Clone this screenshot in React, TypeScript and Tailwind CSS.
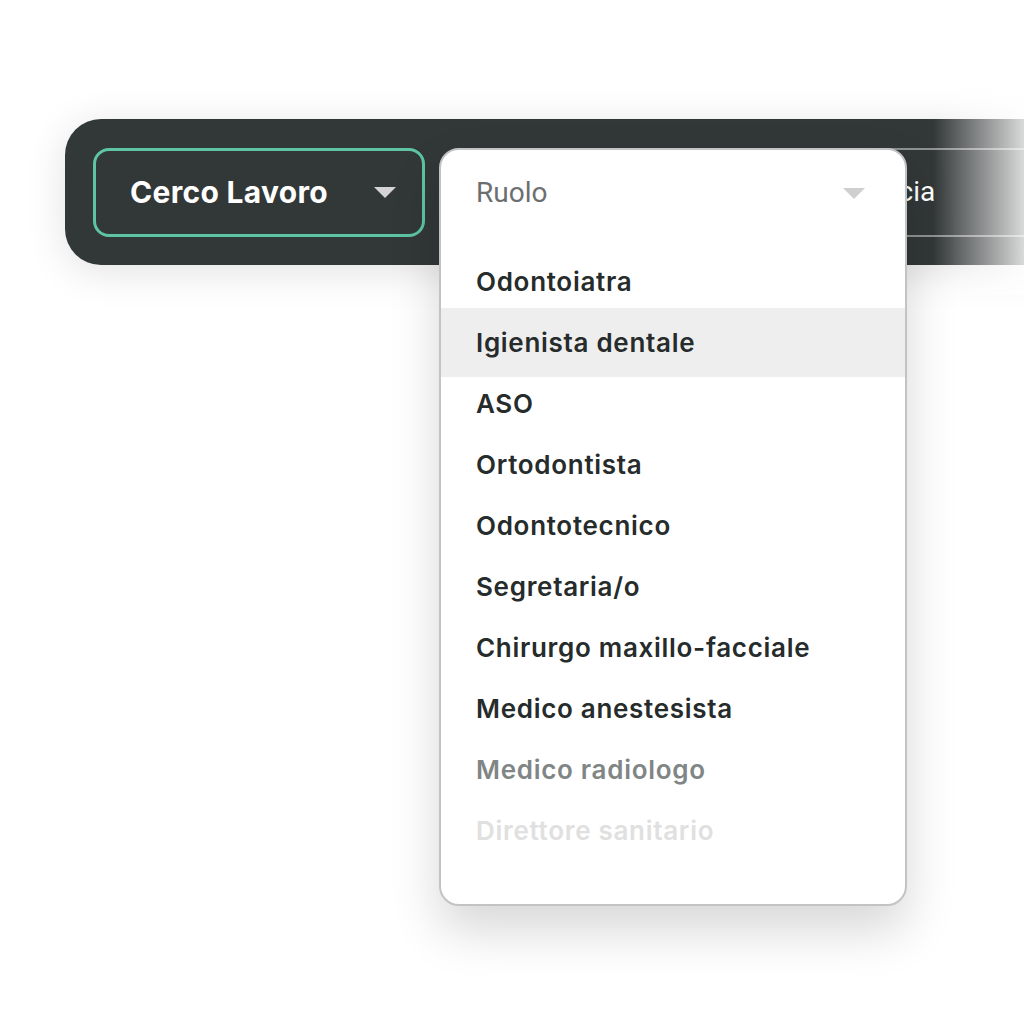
import React from 'react';

const roles = [
  'Odontoiatra',
  'Igienista dentale',
  'ASO',
  'Ortodontista',
  'Odontotecnico',
  'Segretaria/o',
  'Chirurgo maxillo-facciale',
  'Medico anestesista',
  'Medico radiologo',
  'Direttore sanitario',
];

function Caret({ color }: { color: string }) {
  return (
    <svg width="22" height="11" viewBox="0 0 22 11">
      <path d="M0 0 L22 0 L11 11 Z" fill={color} />
    </svg>
  );
}

export default function App() {
  return (
    <div className="relative w-[1024px] h-[1024px] overflow-hidden bg-white font-['Inter',sans-serif]">
      {/* Barra scura con i filtri */}
      <div className="pt-[119px] pl-[65px]">
        <div className="relative flex h-[146px] w-[980px] items-center gap-[14px] rounded-l-[36px] bg-[#323737] pl-[28px] shadow-[0_6px_40px_rgba(0,0,0,0.12)]">
          <button className="flex h-[89px] w-[332px] items-center justify-between rounded-[16px] border-[3px] border-[#5ec4a3] pl-[34px] pr-[26px]">
            <span className="text-[30px] font-bold text-white tracking-[0.3px]">Cerco Lavoro</span>
            <Caret color="#d4d4d4" />
          </button>

          {/* Campo ruolo (coperto dal menu) */}
          <div className="h-[89px] w-[340px]" />

          {/* Campo provincia */}
          <div className="flex h-[89px] flex-1 items-center border-y-2 border-[#8e9191] pl-[27px]">
            <span className="font-['Roboto',sans-serif] text-[28px] text-white">Provincia</span>
          </div>

          {/* Sfumatura a destra */}
          <div className="absolute right-0 top-[-30px] bottom-[-30px] w-[112px] bg-gradient-to-r from-transparent to-white" />
        </div>
      </div>

      {/* Menu a tendina */}
      <div className="absolute left-[439px] top-[148px] flex h-[758px] w-[468px] flex-col overflow-hidden rounded-[20px] border-2 border-[#c2c4c4] bg-white shadow-[0_24px_50px_rgba(0,0,0,0.16)]">
        <div className="flex h-[86px] items-center justify-between pl-[35px] pr-[40px]">
          <span className="font-['Roboto',sans-serif] text-[28px] text-[#6c6f6f]">Ruolo</span>
          <Caret color="#cfcfcf" />
        </div>
        <div className="flex flex-col pt-[15px]">
          {roles.map((role, i) => (
            <div
              key={role}
              className={
                i === 1
                  ? 'relative z-0 -my-[4px] flex h-[69px] items-center bg-[#eeeeee] pl-[35px]'
                  : 'flex h-[61px] items-center pl-[35px]'
              }
            >
              <span
                className={
                  i === 8
                    ? 'text-[26px] font-semibold tracking-[0.7px] text-[#808585]'
                    : i === 9
                    ? 'text-[26px] font-semibold tracking-[0.7px] text-[#e0e0e0]'
                    : 'text-[26px] font-semibold tracking-[0.7px] text-[#262b2b]'
                }
              >
                {role}
              </span>
            </div>
          ))}
        </div>
      </div>
    </div>
  );
}
